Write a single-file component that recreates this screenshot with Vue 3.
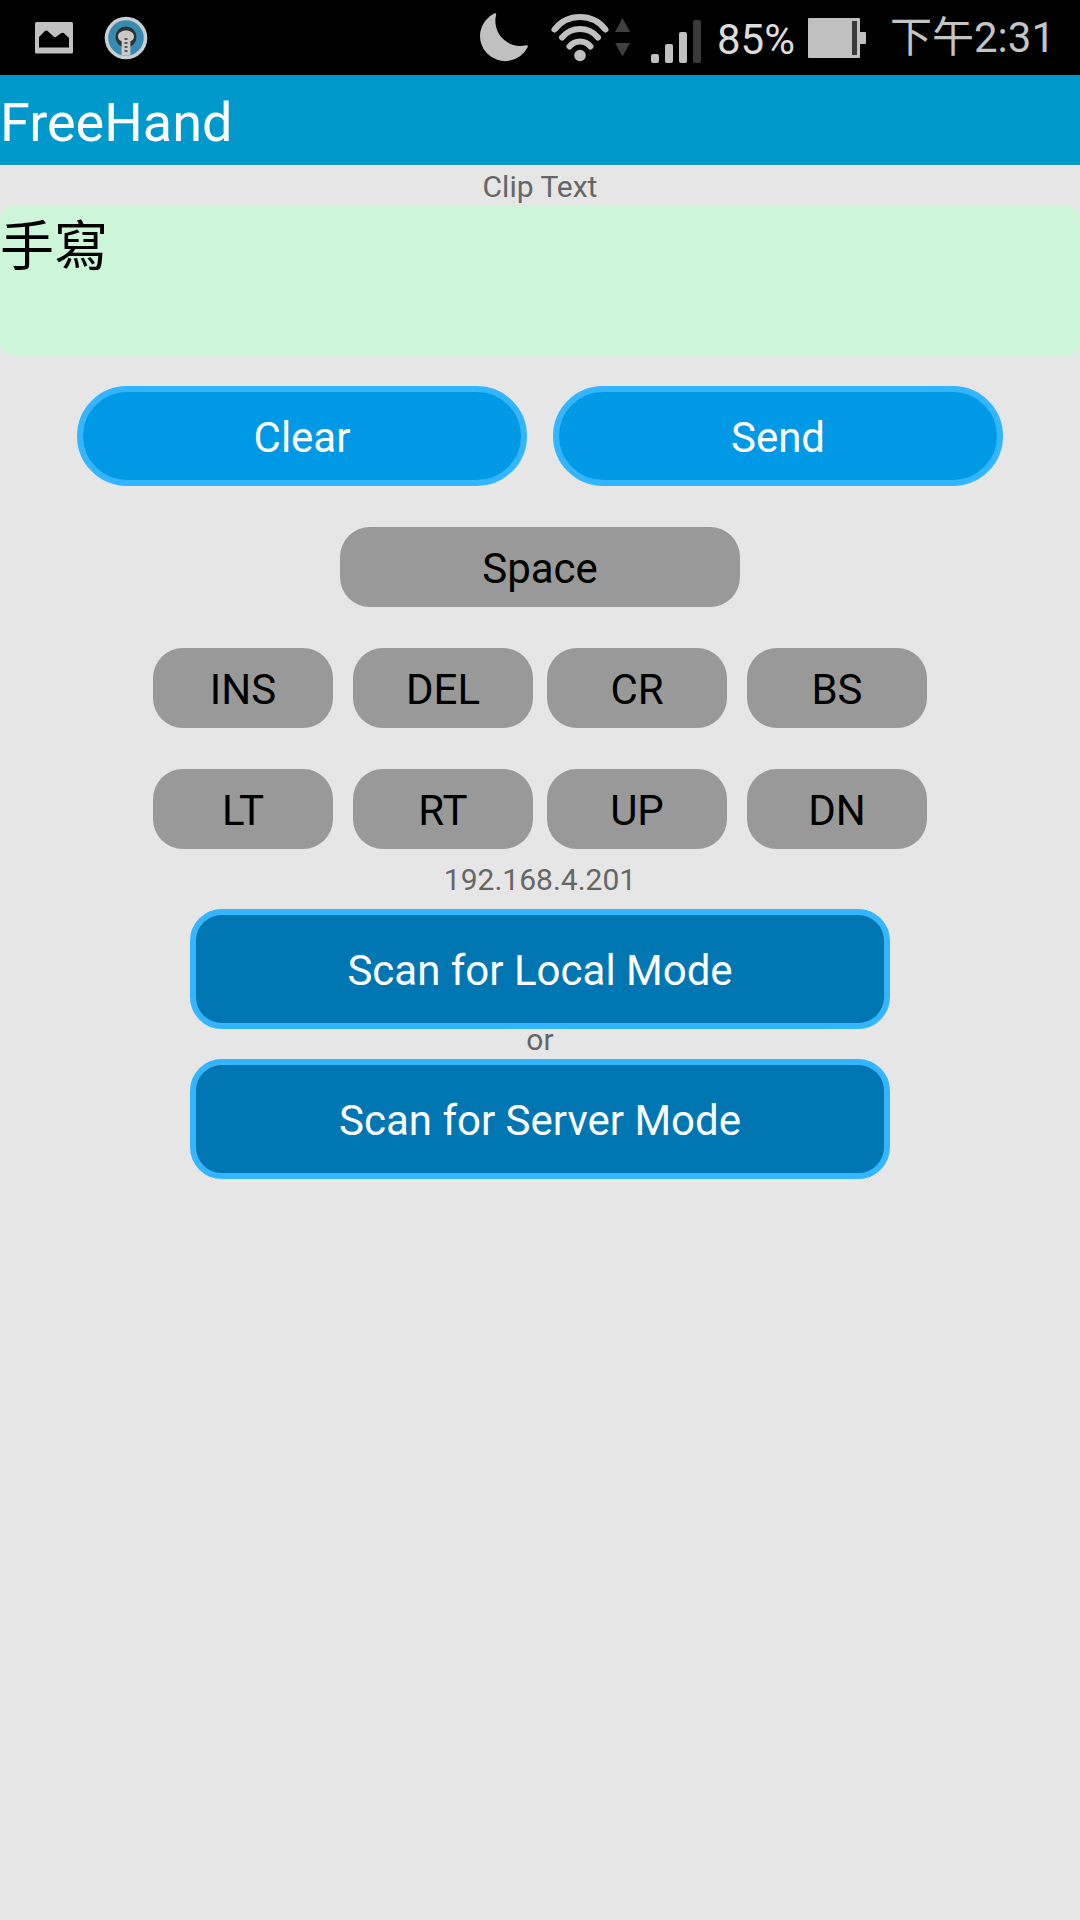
<template>
  <div class="screen">
    <!-- Status Bar -->
    <header class="status-bar">
      <div class="notifications">
        <svg class="icon-picture" width="38" height="32" viewBox="0 0 38 32">
          <rect width="38" height="31.5" rx="1.5" fill="#c1c1c1" />
          <path
            d="M4 25V15L10 9Q11.300 8 12.600 9L18.500 14.500Q20 15.800 21.500 14.500L26 11.300Q27.500 10.200 29 11.300L34 16V25.500H4Z"
            fill="#000"
          />
        </svg>
        <svg class="icon-app" width="44" height="44" viewBox="0 0 44 44">
          <circle cx="22" cy="22" r="21.300" fill="#c9ced2" />
          <circle cx="22" cy="22" r="17.800" fill="#378bb0" />
          <circle cx="22" cy="21" r="10.500" fill="#2b3137" />
          <path
            d="M22 14.500c4.500 0 8 2.500 8 5.700c0 2.600-1.500 4.200-3.600 5.100V39.500h-8.800V25.300c-2.100-0.900-3.600-2.500-3.600-5.100c0-3.200 3.500-5.700 8-5.700z"
            fill="#cdc8c8"
          />
          <path d="M22 22V38" stroke="#55585c" stroke-width="3" stroke-dasharray="2 2" />
        </svg>
      </div>

      <div class="system">
        <svg class="icon-moon" width="49" height="49" viewBox="0 0 49 49">
          <path
            d="M14.500 0.300Q16.500 0 16.200 1.500A25 25 0 0 0 46 32.300Q48.500 32 47.600 34.200A25.100 25.100 0 1 1 14.500 0.300Z"
            fill="#c0c0c0"
          />
        </svg>
        <svg class="icon-wifi" width="80" height="50" viewBox="0 0 80 50">
          <g fill="none" stroke="#c0c0c0" stroke-width="6" stroke-linecap="round">
            <path d="M3.500 16.500A32.300 32.300 0 0 1 54.500 16.500" />
            <path d="M11 24.500A23.300 23.300 0 0 1 47 24.500" />
            <path d="M18.500 33.500A13.500 13.500 0 0 1 39.500 33.500" />
          </g>
          <circle cx="29" cy="42.500" r="5.800" fill="#c0c0c0" />
          <path d="M71.500 5L79 19H64Z" fill="#404040" />
          <path d="M64 30H79L71.500 43.500Z" fill="#404040" />
        </svg>
        <svg class="icon-signal" width="50" height="43" viewBox="0 0 50 43">
          <rect
            v-for="bar in signalBars"
            :key="bar.x"
            :x="bar.x"
            :y="43 - bar.height"
            width="8"
            :height="bar.height"
            rx="2"
            :fill="bar.active ? '#c0c0c0' : '#3a3a3a'"
          />
        </svg>
        <span class="battery-level">85%</span>
        <svg class="icon-battery" width="58" height="40" viewBox="0 0 58 40">
          <rect width="52" height="40" rx="1" fill="#c0c0c0" />
          <rect x="44" y="3" width="5" height="34" fill="#3a3a3a" />
          <rect x="51" y="14" width="7" height="12" rx="1" fill="#c0c0c0" />
        </svg>
        <span class="clock">下午2:31</span>
      </div>
    </header>

    <!-- Title -->
    <h1 class="title">FreeHand</h1>

    <!-- Clip Text -->
    <p class="label clip-label">Clip Text</p>
    <div class="clip-text">{{ clipText }}</div>

    <div class="actions">
      <button class="btn btn-action" @click="clipText = ''">Clear</button>
      <button class="btn btn-action">Send</button>
    </div>

    <!-- Keys -->
    <div class="keys">
      <button class="btn btn-key btn-space">Space</button>
      <div v-for="(row, index) in keyRows" :key="index" class="key-row">
        <div v-for="pair in row" :key="pair[0]" class="key-pair">
          <button v-for="name in pair" :key="name" class="btn btn-key">{{ name }}</button>
        </div>
      </div>
    </div>

    <!-- Connection -->
    <p class="label address">192.168.4.201</p>
    <button class="btn btn-scan">Scan for Local Mode</button>
    <p class="label or">or</p>
    <button class="btn btn-scan">Scan for Server Mode</button>
  </div>
</template>

<script setup>
import { ref } from 'vue'

const clipText = ref('手寫')

const keyRows = [
  [['INS', 'DEL'], ['CR', 'BS']],
  [['LT', 'RT'], ['UP', 'DN']]
]

const signalBars = [
  { x: 0, height: 9, active: true },
  { x: 14, height: 19, active: true },
  { x: 28, height: 31, active: true },
  { x: 42, height: 43, active: false }
]
</script>

<style>
body {
  margin: 0;
  background: #e6e6e6;
}
</style>

<style scoped>
.screen {
  display: flex;
  flex-direction: column;
  align-items: center;
  width: 1080px;
  height: 1920px;
  overflow: hidden;
  background: #e6e6e6;
  font-family: Roboto, 'Noto Sans CJK TC', sans-serif;
}

/* Status Bar */
.status-bar {
  display: flex;
  justify-content: space-between;
  box-sizing: border-box;
  width: 100%;
  height: 75px;
  padding: 0 25px 0 35px;
  background: #000;
  font-size: 42px;
  white-space: nowrap;
}

.notifications,
.system {
  display: flex;
  align-items: flex-start;
}

.icon-picture {
  margin-top: 22px;
}

.icon-app {
  margin: 16px 0 0 31px;
}

.icon-moon {
  margin-top: 13px;
}

.icon-wifi {
  margin: 13px 0 0 22px;
}

.icon-signal {
  margin: 20px 0 0 20px;
}

.battery-level {
  width: 91px;
  margin: 4px 0 0 16px;
  line-height: 71px;
  color: #dcdcdc;
}

.icon-battery {
  margin-top: 18px;
}

.clock {
  margin: 2px 0 0 24px;
  line-height: 71px;
  color: #c4c4c4;
}

/* Title */
.title {
  box-sizing: border-box;
  width: 100%;
  height: 90px;
  margin: 0;
  padding-top: 5px;
  border-bottom: 2px solid #1b8fb4;
  background: #0099cc;
  color: #fff;
  font-size: 54px;
  font-weight: 400;
  line-height: 85px;
}

/* Labels */
.label {
  margin: 0;
  color: #666;
  font-size: 30px;
}

.clip-label {
  height: 40px;
  line-height: 43px;
}

.address {
  height: 60px;
  line-height: 61px;
}

.or {
  height: 30px;
  line-height: 21px;
}

.clip-text {
  width: 100%;
  height: 151px;
  border-radius: 15px;
  background: #cdf6d9;
  color: #000;
  font-size: 54px;
  line-height: 86px;
}

/* Button Styles */
.btn {
  box-sizing: border-box;
  margin: 0;
  padding: 3px 0 0;
  border: none;
  font-family: inherit;
  font-size: 42px;
  font-weight: 400;
  cursor: pointer;
}

.btn-action {
  width: 450px;
  height: 100px;
  border: 6px solid #33b5ff;
  border-radius: 50px;
  background: #0099e6;
  color: #fff;
}

.btn-key {
  width: 180px;
  height: 80px;
  border-radius: 30px;
  background: #999;
  color: #000;
}

.btn-space {
  width: 400px;
}

.btn-scan {
  width: 700px;
  height: 120px;
  border: 6px solid #33b5ff;
  border-radius: 32px;
  background: #0077b3;
  color: #fff;
}

.actions {
  display: flex;
  gap: 26px;
  margin-top: 30px;
}

.keys {
  display: flex;
  flex-direction: column;
  align-items: center;
  gap: 41px;
  margin-top: 41px;
}

.key-row {
  display: flex;
  gap: 14px;
}

.key-pair {
  display: flex;
  gap: 20px;
}
</style>
